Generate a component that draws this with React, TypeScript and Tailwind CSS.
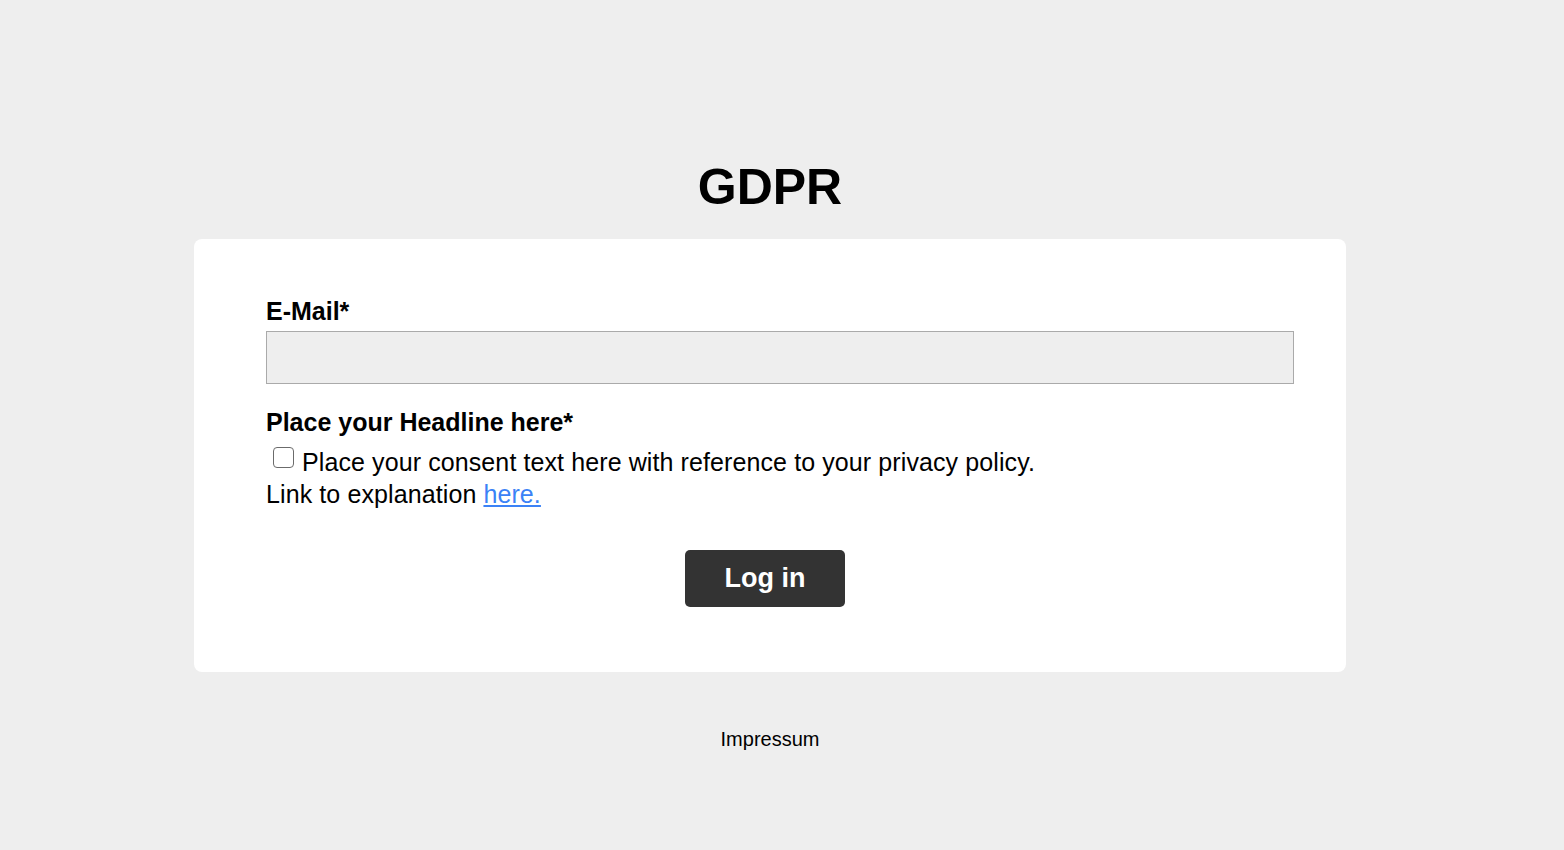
export default function App() {
  return (
    <div
      className="min-h-[850px] w-full bg-[#eeeeee] text-black"
      style={{ fontFamily: '"Liberation Sans", Arial, sans-serif' }}
    >
      <div className="flex w-[1540px] flex-col items-center pt-[158px]">
        <h1 className="text-[50px] leading-[58px] font-bold">GDPR</h1>
        <div className="mt-[23px] w-[1152px] rounded-[8px] bg-white pl-[72px] pr-[52px] pt-[58px] pb-[65px]">
          <label className="block text-[25px] leading-[28px] font-bold">E-Mail*</label>
          <div className="mt-[6px] h-[53px] w-full border border-[#aaaaaa] bg-[#eeeeee]" />
          <div className="mt-[24px] text-[25px] leading-[28px] font-bold">Place your Headline here*</div>
          <div className="mt-[10px] text-[25px] leading-[32px] tracking-[0.1px]">
            <div className="flex items-start">
              <span className="ml-[7px] mt-[1px] mr-[8px] inline-block h-[21px] w-[21px] shrink-0 rounded-[4px] border-[1.5px] border-[#6b6b6b] bg-white" />
              <span>Place your consent text here with reference to your privacy policy.</span>
            </div>
            <div>
              Link to explanation{" "}
              <a href="#" className="text-[#3b82f6] underline">here.</a>
            </div>
          </div>
          <div className="mt-[40px] flex justify-center pr-[30px]">
            <button className="h-[57px] w-[160px] rounded-[5px] bg-[#333333] text-[27px] font-bold text-white">
              Log in
            </button>
          </div>
        </div>
        <div className="mt-[55px] text-[20px] leading-[24px]">Impressum</div>
      </div>
    </div>
  );
}
